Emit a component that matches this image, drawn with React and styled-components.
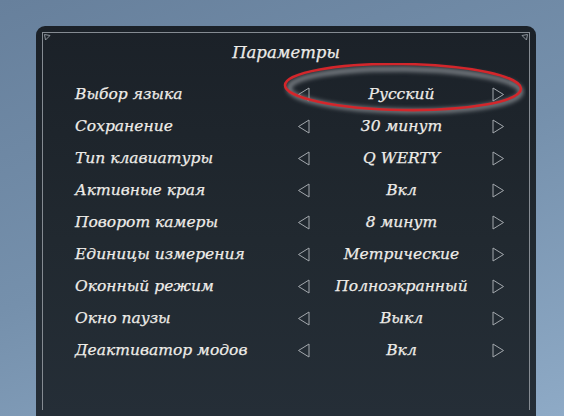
import React from 'react'
import styled, { createGlobalStyle } from 'styled-components'

const GlobalStyle = createGlobalStyle`
    html, body {
        margin: 0;
        padding: 0;
        height: 100%;
        overflow: hidden;
    }
    body {
        background: linear-gradient(160deg, #67809c 0%, #7590ac 50%, #8eaac6 100%);
        font-family: 'DejaVu Serif', 'Liberation Serif', serif;
    }
`

const Page = styled.div`
    width: 564px;
    height: 416px;
    padding: 26px 0 0 36px;
    box-sizing: border-box;
`

const Panel = styled.div`
    width: 500px;
    height: 390px;
    padding: 6px;
    box-sizing: border-box;
    border-radius: 9px 9px 0 0;
    background: linear-gradient(180deg, #1b2128 0%, #212930 55%, #252e37 100%);
`

const Frame = styled.div`
    position: relative;
    height: 100%;
    box-sizing: border-box;
    border: 1px solid #858b92;
    border-bottom: none;
    padding: 4px 0 0 32px;
`

const Corner = styled.svg`
    position: absolute;
    top: 1px;
    ${(p) => (p.$right ? 'right: 1px;' : 'left: 1px;')}
    width: 7px;
    height: 7px;
`

const Title = styled.h1`
    margin: 0 0 9px -32px;
    height: 32px;
    line-height: 32px;
    text-align: center;
    font-family: 'DejaVu Serif', serif;
    font-style: italic;
    font-weight: normal;
    font-size: 16.5px;
    color: #ecebe8;
    -webkit-text-stroke: 0.25px #ecebe8;
`

const List = styled.div`
    display: flex;
    flex-direction: column;
`

const Row = styled.div`
    position: relative;
    display: grid;
    grid-template-columns: 222px 14px 181px 14px;
    align-items: center;
    height: 32px;
`

const Label = styled.span`
    font-style: italic;
    font-size: 15.5px;
    color: #eeece8;
    white-space: nowrap;
    -webkit-text-stroke: 0.25px #eeece8;
`

const Value = styled(Label)`
    text-align: center;
`

const Arrow = styled.svg`
    width: 13px;
    height: 15px;
    display: block;
`

const Highlight = styled.svg`
    position: absolute;
    left: 207px;
    top: -15px;
    width: 244px;
    height: 56px;
    pointer-events: none;
`

const options = [
    ['Выбор языка', 'Русский'],
    ['Сохранение', '30 минут'],
    ['Тип клавиатуры', 'Q WERTY'],
    ['Активные края', 'Вкл'],
    ['Поворот камеры', '8 минут'],
    ['Единицы измерения', 'Метрические'],
    ['Оконный режим', 'Полноэкранный'],
    ['Окно паузы', 'Выкл'],
    ['Деактиватор модов', 'Вкл'],
]

function ArrowIcon({ dir }) {
    const points = dir === 'left' ? '12,1 1.5,7.5 12,14' : '1,1 11.5,7.5 1,14'
    return (
        <Arrow viewBox="0 0 13 15">
            <polygon points={points} fill="none" stroke="#a3a8ad" strokeWidth="1" />
        </Arrow>
    )
}

function CornerMark({ right }) {
    return (
        <Corner $right={right} viewBox="0 0 7 7">
            <polygon
                points={right ? '6.5,0.5 1,1.5 5.5,6' : '0.5,0.5 6,1.5 1.5,6'}
                fill="none"
                stroke="#8d939a"
                strokeWidth="1"
            />
        </Corner>
    )
}

export default function App() {
    return (
        <>
            <GlobalStyle />
            <Page>
                <Panel>
                    <Frame>
                        <CornerMark />
                        <CornerMark right />
                        <Title>Параметры</Title>
                        <List>
                            {options.map(([label, value], i) => (
                                <Row key={label}>
                                    <Label>{label}</Label>
                                    <ArrowIcon dir="left" />
                                    <Value>{value}</Value>
                                    <ArrowIcon dir="right" />
                                    {i === 0 && (
                                        <Highlight viewBox="0 0 244 56">
                                            <defs>
                                                <filter id="soft" x="-10%" y="-30%" width="120%" height="160%">
                                                    <feGaussianBlur stdDeviation="2.2" />
                                                </filter>
                                            </defs>
                                            <ellipse
                                                cx="123" cy="27" rx="116" ry="21"
                                                fill="none" stroke="#8a8f94" strokeWidth="5"
                                                filter="url(#soft)" opacity="0.85"
                                                transform="rotate(0.9 123 27)"
                                            />
                                            <ellipse
                                                cx="121" cy="24" rx="118" ry="23"
                                                fill="none" stroke="#d3262b" strokeWidth="2.6"
                                                transform="rotate(0.9 121 24)"
                                            />
                                        </Highlight>
                                    )}
                                </Row>
                            ))}
                        </List>
                    </Frame>
                </Panel>
            </Page>
        </>
    )
}
